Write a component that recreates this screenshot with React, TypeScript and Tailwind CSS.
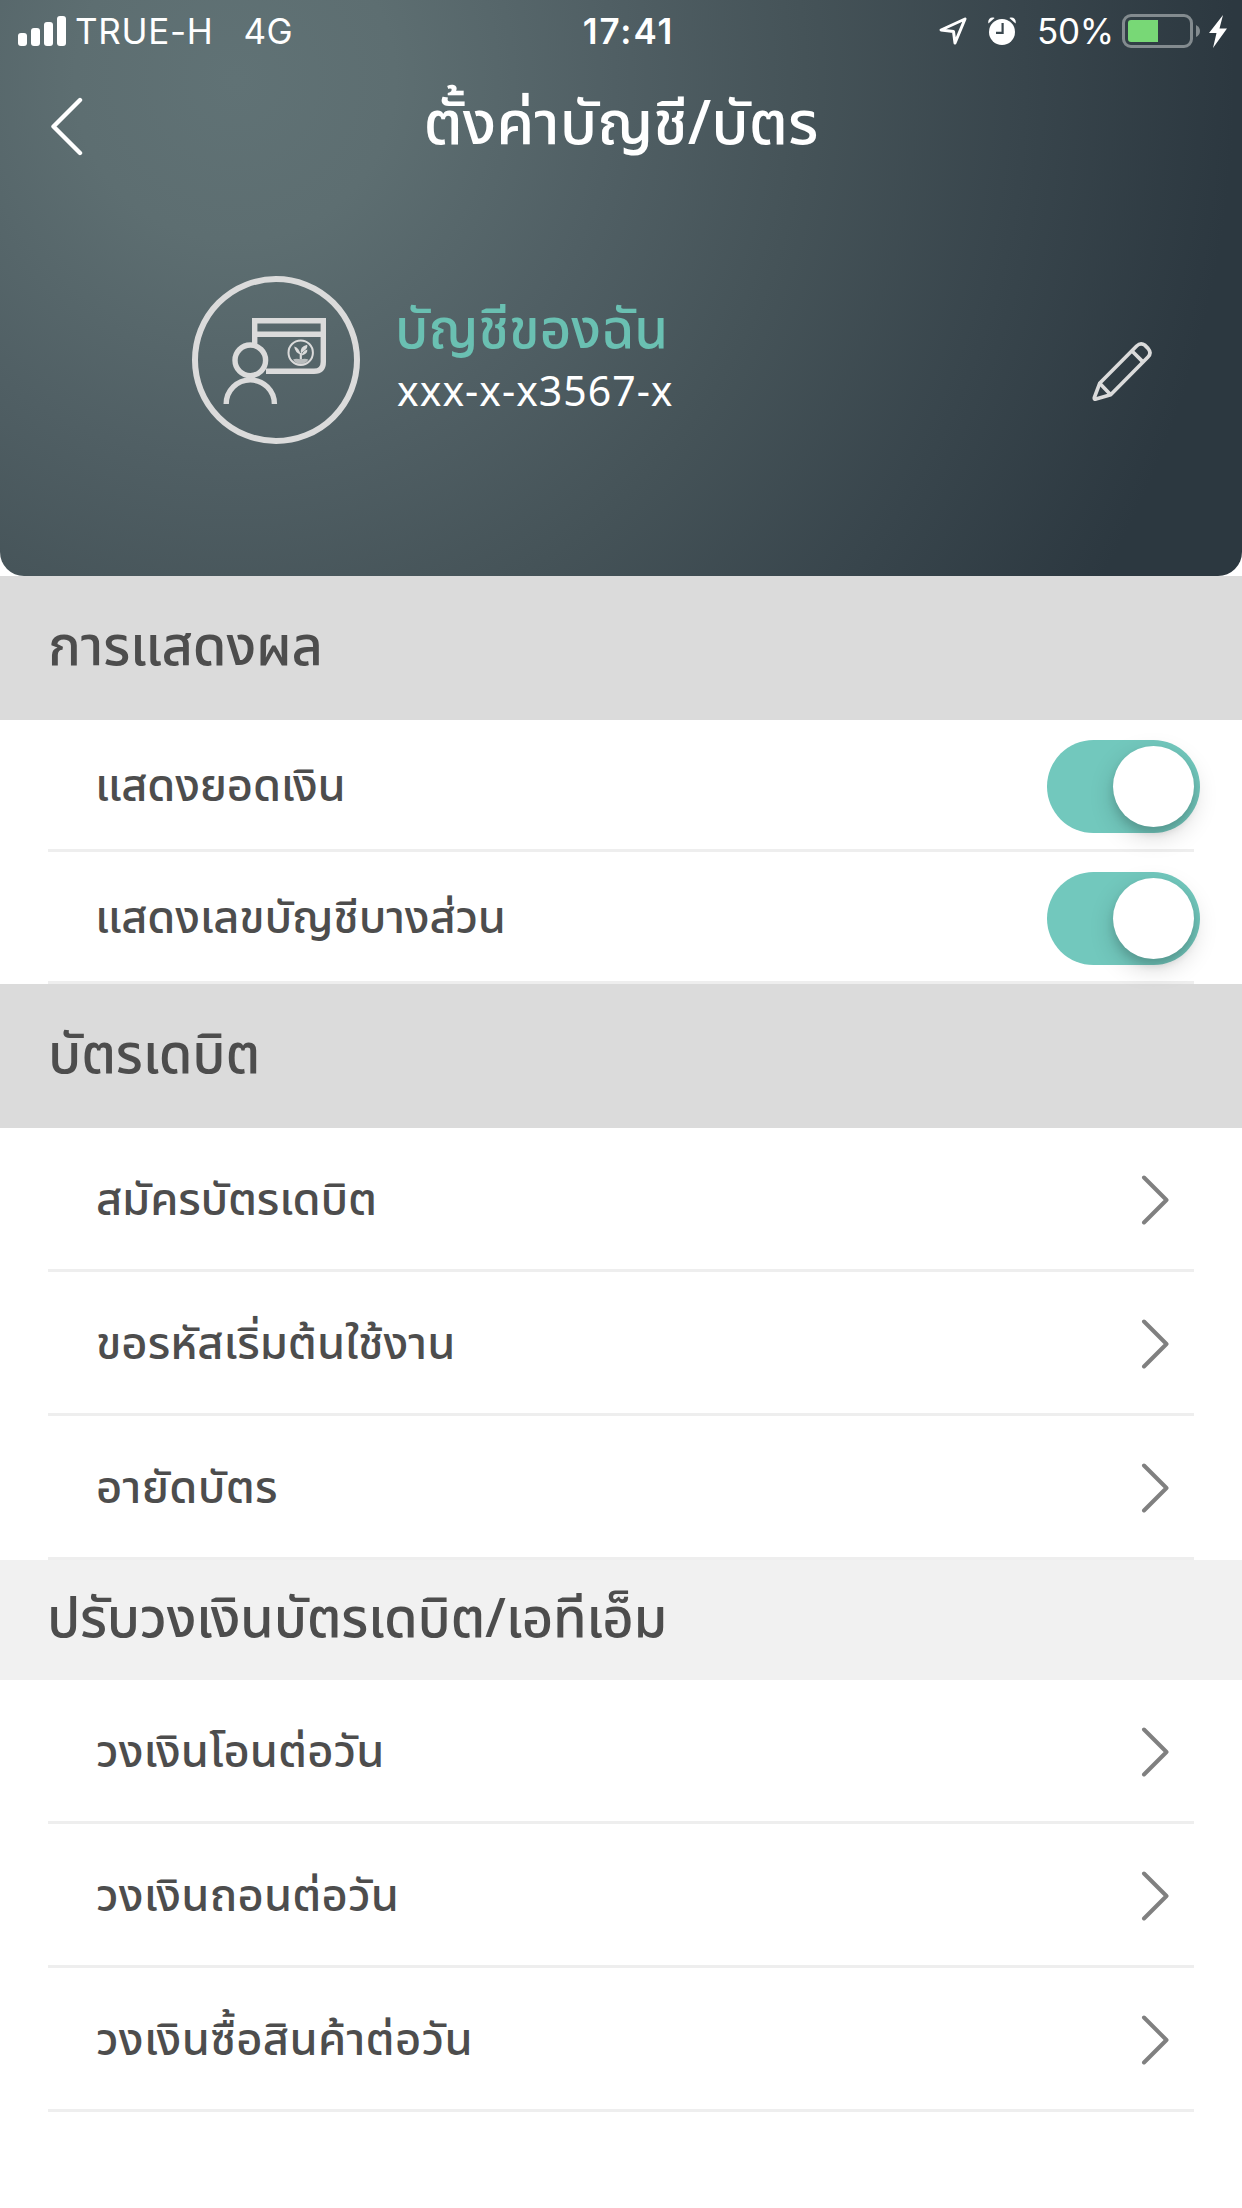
import type { ReactNode } from "react";

function StatusBar() {
  return (
    <div className="grid h-[62px] grid-cols-[1fr_auto_1fr] items-center pl-[18px] pr-[15px] font-['Inter',sans-serif] text-[35px] text-white">
      <div className="flex items-center">
        <svg width="48" height="30" viewBox="0 0 48 30" fill="currentColor">
          <rect x="0" y="17" width="9" height="13" rx="3" />
          <rect x="13" y="12" width="9" height="18" rx="3" />
          <rect x="26" y="6" width="9" height="24" rx="3" />
          <rect x="39" y="0" width="9" height="30" rx="3" />
        </svg>
        <span className="ml-[9px] tracking-[0.7px]">TRUE-H</span>
        <span className="ml-[30px] tracking-[0.3px]">4G</span>
      </div>
      <span className="pl-[12px] font-semibold tracking-[1.9px]">17:41</span>
      <div className="flex items-center justify-end">
        <svg width="28" height="28" viewBox="0 0 28 28" fill="none" stroke="currentColor" strokeWidth="3" strokeLinejoin="round">
          <path d="M26 2 L2 13 L14.5 14.5 L16 26 Z" />
        </svg>
        <svg className="ml-[21px]" width="28" height="28" viewBox="0 0 28 28" fill="currentColor">
          <circle cx="14" cy="15" r="13" />
          <path d="M0.4 6.5 C-0.6 2 3 -0.8 6.6 0.9 Z M27.6 6.5 C28.6 2 25 -0.8 21.4 0.9 Z" />
          <path d="M14.6 6 V15.8 H8" fill="none" stroke="#3a474e" strokeWidth="2.2" />
        </svg>
        <span className="ml-[21px] tracking-[-0.2px]">50%</span>
        <svg className="ml-[8px]" width="79" height="34" viewBox="0 0 79 34">
          <rect x="1.5" y="1.5" width="68" height="31" rx="7.5" fill="none" stroke="#838b8f" strokeWidth="3" />
          <path d="M36 6 V28 H9 A3 3 0 0 1 6 25 V9 A3 3 0 0 1 9 6 Z" fill="#78d876" />
          <path d="M74 11 Q78 13 78 17 Q78 21 74 23 Z" fill="#838b8f" />
        </svg>
        <svg className="ml-[8px]" width="18" height="33" viewBox="0 0 18 33" fill="currentColor">
          <path d="M14 0 L0 18 H7.5 L4 33 L18 13.5 H10.5 Z" />
        </svg>
      </div>
    </div>
  );
}

function AccountIcon() {
  return (
    <svg width="168" height="168" viewBox="0 0 168 168" fill="none" stroke="#dbdbdb" strokeWidth="5.4">
      <circle cx="84" cy="84" r="81" strokeWidth="6" />
      <path d="M62.7 69 V44.7 H131.3 V86 Q131.3 95.3 122 95.3 H74" />
      <path d="M62.7 58.2 H131.3" />
      <circle cx="58.3" cy="84.3" r="15.3" />
      <path d="M34.2 128 A24.1 24.1 0 0 1 82.4 128" />
      <circle cx="108.7" cy="76.7" r="12.2" strokeWidth="2" />
      <g fill="#dbdbdb" stroke="none">
        <path d="M102.2 70.5 Q107.5 72 108.3 78.5 Q103 76.5 102.2 70.5 Z" />
        <path d="M108.8 77.5 Q107.5 70.5 115.2 68.8 Q116 72.5 112.5 74.5 Z" />
        <path d="M109.8 79.5 Q110 75.5 115.4 73.6 Q115.6 78 109.8 79.5 Z" />
        <path d="M107.7 77 H109.9 V83.5 H107.7 Z" />
        <path d="M101 83.5 Q104.5 82 108.7 83.5 Q112.8 82 116.4 83.5 L114.5 86 Q108.7 89.8 102.8 86 Z" opacity="0.75" />
      </g>
    </svg>
  );
}

function Header() {
  return (
    <header className="h-[576px] rounded-b-[24px] bg-[radial-gradient(circle_1000px_at_235px_80px,#607275_0%,#5d6e71_16%,#505f64_38%,#455358_57%,#38454c_79%,#2c3840_100%)]">
      <StatusBar />
      <div className="grid h-[128px] grid-cols-[82px_1fr_82px] items-center text-white">
        <svg className="ml-[50px]" width="34" height="60" viewBox="0 0 34 60" fill="none" stroke="currentColor" strokeWidth="4.4" strokeLinecap="round" strokeLinejoin="round">
          <path d="M30 4 L3.5 30.5 L30 57" />
        </svg>
        <h1 className="text-center text-[61.2px] font-medium leading-[128px]">ตั้งค่าบัญชี/บัตร</h1>
      </div>
      <div className="mt-[86px] flex items-start pl-[192px] pr-[88px]">
        <AccountIcon />
        <div className="ml-[35px] mt-[26px]">
          <p className="text-[54.5px] font-medium leading-[60px] text-[#6ac0b2]">บัญชีของฉัน</p>
          <p className="pl-[2px] text-[41px] leading-[62px] tracking-[1px] text-white">xxx-x-x3567-x</p>
        </div>
        <svg className="ml-auto mt-[64px]" width="63" height="63" viewBox="93 90 189 189" fill="none" stroke="#dbdbdb" strokeWidth="11" strokeLinejoin="round">
          <path d="M119 220 L230 108 Q242 97 255 106 L264 115 Q276 129 264 141 L152 254 L108 267 Q102 269 103 263 Z" />
          <path d="M119 220 L152 254 M216 123 L248 155" />
        </svg>
      </div>
    </header>
  );
}

function SectionTitle({ children, light }: { children: ReactNode; light?: boolean }) {
  return (
    <h2
      className={
        light
          ? "bg-[#f1f1f1] pl-[47px] text-[54.4px] font-medium leading-[120px] tracking-[-0.3px]"
          : "bg-[#dbdbdb] pl-[48px] text-[54.4px] font-medium leading-[144px] tracking-[-0.2px]"
      }
    >
      {children}
    </h2>
  );
}

function ToggleRow({ label }: { label: string }) {
  return (
    <div className="mx-[48px] flex h-[132px] items-center justify-between border-b-3 border-[#eeeeee] pl-[47px] pt-[4px]">
      <span className="pt-[1px] text-[45.3px] font-medium leading-[60px] tracking-[-0.2px]">{label}</span>
      <div className="-mr-[6px] flex h-[93px] w-[153px] items-center justify-end rounded-full bg-[#72c8bd] pr-[6px]">
        <div className="size-[81px] rounded-full bg-white shadow-[0_9px_24px_rgba(0,0,0,0.17),0_6px_9px_rgba(0,0,0,0.12)]" />
      </div>
    </div>
  );
}

function LinkRow({ label, tracking = "tracking-normal" }: { label: string; tracking?: string }) {
  return (
    <div className="mx-[48px] flex h-[144px] items-center justify-between border-b-3 border-[#eeeeee] pl-[48px] pr-[24px] pt-[3px]">
      <span className={`pt-[2px] text-[45.3px] font-medium leading-[60px] ${tracking}`}>{label}</span>
      <svg width="29" height="50" viewBox="0 0 29 50" fill="none" stroke="#808080" strokeWidth="4" strokeLinecap="round" strokeLinejoin="round">
        <path d="M3 2.5 L25.5 25 L3 47.5" />
      </svg>
    </div>
  );
}

export default function App() {
  return (
    <main className="min-h-[2208px] w-[1242px] overflow-hidden bg-white font-['Noto_Sans_Thai','Noto_Sans',sans-serif] text-[#4d4d4d]">
      <Header />
      <SectionTitle>การแสดงผล</SectionTitle>
      <ToggleRow label="แสดงยอดเงิน" />
      <ToggleRow label="แสดงเลขบัญชีบางส่วน" />
      <SectionTitle>บัตรเดบิต</SectionTitle>
      <LinkRow label="สมัครบัตรเดบิต" tracking="tracking-[-0.2px]" />
      <LinkRow label="ขอรหัสเริ่มต้นใช้งาน" />
      <LinkRow label="อายัดบัตร" tracking="tracking-[0.3px]" />
      <SectionTitle light>ปรับวงเงินบัตรเดบิต/เอทีเอ็ม</SectionTitle>
      <LinkRow label="วงเงินโอนต่อวัน" tracking="tracking-[0.1px]" />
      <LinkRow label="วงเงินถอนต่อวัน" tracking="tracking-[0.2px]" />
      <LinkRow label="วงเงินซื้อสินค้าต่อวัน" tracking="tracking-[0.3px]" />
    </main>
  );
}
